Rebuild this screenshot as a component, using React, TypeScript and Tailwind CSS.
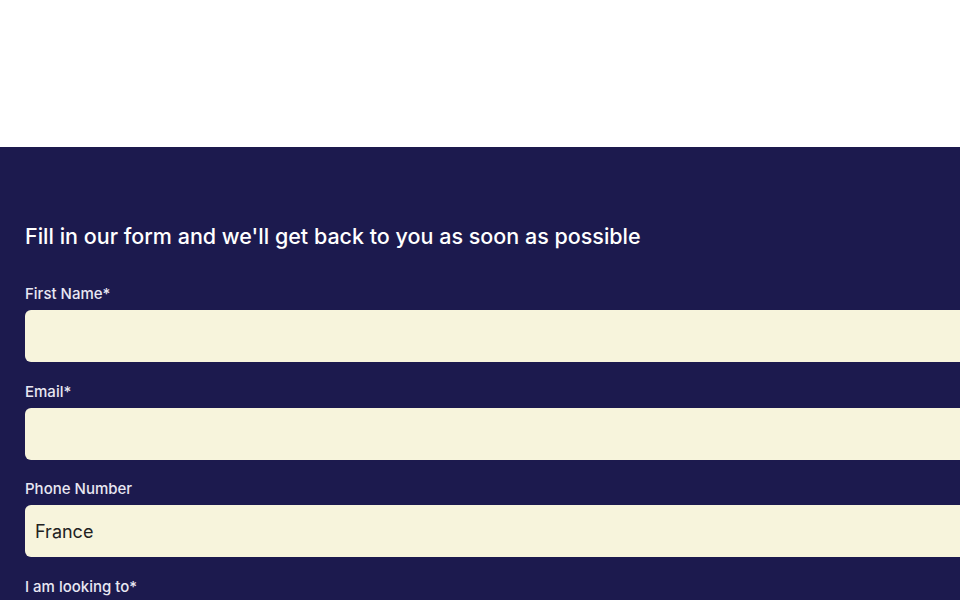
import React from 'react';

const Field: React.FC<{ label: string; value?: string }> = ({ label, value }) => (
  <div className="flex flex-col">
    <label className="text-[15px] leading-5 font-medium text-[#e8e7f2] mb-[6px]">{label}</label>
    <div className="h-[52px] w-[1000px] rounded-md bg-[#f7f4dc] flex items-center px-[10px] text-[18px] text-[#222222]">
      {value}
    </div>
  </div>
);

export default function App() {
  return (
    <div className="w-[960px] h-[600px] overflow-hidden bg-white" style={{ fontFamily: 'Inter, "Noto Sans", sans-serif' }}>
      <div className="h-[147px] bg-white" />
      <section className="bg-[#1c1a4e] pl-[25px] pt-[75px] pb-10 h-[453px]">
        <h2 className="text-[21.5px] leading-7 text-white font-medium mb-[34px]">
          Fill in our form and we'll get back to you as soon as possible
        </h2>
        <div className="flex flex-col gap-[19.5px]">
          <Field label="First Name*" />
          <Field label="Email*" />
          <Field label="Phone Number" value="France" />
          <Field label="I am looking to*" />
        </div>
      </section>
    </div>
  );
}
